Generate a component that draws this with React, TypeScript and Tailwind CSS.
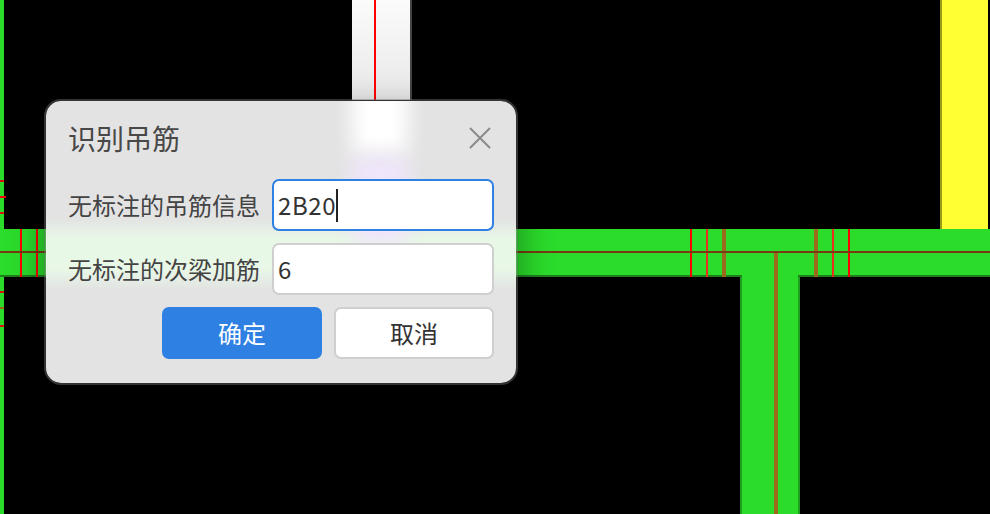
const FONT = "font-['Noto_Sans_CJK_SC','Noto_Sans',sans-serif]";

const GREEN = "#2bdc2b";
const BROWN = "#9b6a1c";
const RED = "#ff0000";
const SOFT_RED = "#e8301c";

function Drawing() {
  const ticks: [number, number, string][] = [
    [20, 2, RED],
    [36, 2, RED],
    [690, 2, RED],
    [706, 2, SOFT_RED],
    [722, 4, BROWN],
    [814, 4, BROWN],
    [832, 2, SOFT_RED],
    [848, 2, RED],
  ];
  const side: [number, number, string][] = [
    [180, 4, "#e01010"],
    [196, 6, RED],
    [212, 4, "#e01010"],
    [291, 4, "#e01010"],
    [307, 4, BROWN],
    [325, 4, "#e01010"],
  ];
  return (
    <svg width="990" height="514" viewBox="0 0 990 514" shapeRendering="crispEdges" className="block bg-black">
      <defs>
        <linearGradient id="stripe" x1="0" y1="0" x2="0" y2="1">
          <stop offset="0" stopColor="#fbfbfb" />
          <stop offset="1" stopColor="#e8e8e8" />
        </linearGradient>
      </defs>
      <rect x="0" y="0" width="4" height="514" fill={GREEN} />
      {side.map(([y, w, c]) => (
        <rect key={y} x="0" y={y} width={w} height="2" fill={c} />
      ))}
      <rect x="352" y="0" width="58" height="100" fill="url(#stripe)" />
      <rect x="410" y="0" width="2" height="100" fill="#444444" />
      <rect x="374" y="0" width="2" height="100" fill={RED} />

      <rect x="942" y="0" width="46" height="229" fill="#ffff33" />
      <rect x="940" y="0" width="2" height="229" fill="#9c9c1a" />

      <rect x="0" y="229" width="990" height="46" fill={GREEN} />
      <rect x="0" y="275" width="990" height="2" fill="#1f7f1f" />
      <rect x="740" y="277" width="60" height="237" fill="#1f9e1f" />
      <rect x="742" y="275" width="56" height="239" fill={GREEN} />
      <rect x="774" y="253" width="4" height="261" fill={BROWN} />
      {ticks.map(([x, w, c]) => (
        <rect key={x} x={x} y="229" width={w} height="48" fill={c} />
      ))}
      <rect x="0" y="251" width="990" height="2" fill="#7a3a10" />
    </svg>
  );
}

function Field({ label, value, focused }: { label: string; value: string; focused?: boolean }) {
  return (
    <div className="flex items-center justify-between">
      <span className="whitespace-nowrap text-[24px] leading-[32px] text-[#444444]">{label}</span>
      <div
        className={`flex h-[52px] w-[222px] items-center rounded-[7px] border-2 bg-white pl-[4px] text-[24px] text-[#333333] ${
          focused ? "border-[#2e80e2]" : "border-[#cfcfcf]"
        }`}
      >
        <span className="tracking-[0.6px]">{value}</span>
        {focused && <span className="h-[33px] w-[2px] bg-[#222222]" />}
      </div>
    </div>
  );
}

function Dialog() {
  return (
    <div
      className={`absolute left-[44px] top-[99px] h-[286px] w-[474px] overflow-hidden rounded-[17px] border-2 border-[rgba(117,117,117,0.44)] bg-[#e3e3e3] bg-clip-padding shadow-[0_14px_36px_rgba(0,0,0,0.4)] ${FONT}`}
    >
      <div className="absolute left-[-20px] top-[128px] h-[50px] w-[510px] bg-[#e8f8e6] blur-[8px]" />
      <div className="absolute left-[306px] top-[-20px] h-[74px] w-[56px] bg-white blur-[10px]" />
      <div className="absolute left-[306px] top-[56px] h-[88px] w-[56px] bg-[#f0e5fb] blur-[10px]" />
      <div className="relative flex h-full flex-col px-[22px] pt-[19px]">
        <div className="flex h-[36px] items-center justify-between">
          <span className="text-[28px] leading-[36px] text-[#484848]">识别吊筋</span>
          <svg width="24" height="24" viewBox="0 0 24 24" className="mr-[2px]" fill="none" stroke="#8a8a8a" strokeWidth="2">
            <path d="M2 2 L22 22 M22 2 L2 22" />
          </svg>
        </div>
        <div className="mt-[23px] flex flex-col gap-[12px]">
          <Field label="无标注的吊筋信息" value="2B20" focused />
          <Field label="无标注的次梁加筋" value="6" />
        </div>
        <div className="mt-[12px] flex justify-end gap-[12px]">
          <button className="h-[52px] w-[160px] rounded-[7px] bg-[#2e80e2] text-[24px] text-white">确定</button>
          <button className="h-[52px] w-[160px] rounded-[7px] border-2 border-[#cfcfcf] bg-white text-[24px] text-[#333333]">取消</button>
        </div>
      </div>
    </div>
  );
}

export default function App() {
  return (
    <div className="relative h-[514px] w-[990px] overflow-hidden">
      <Drawing />
      <Dialog />
    </div>
  );
}
